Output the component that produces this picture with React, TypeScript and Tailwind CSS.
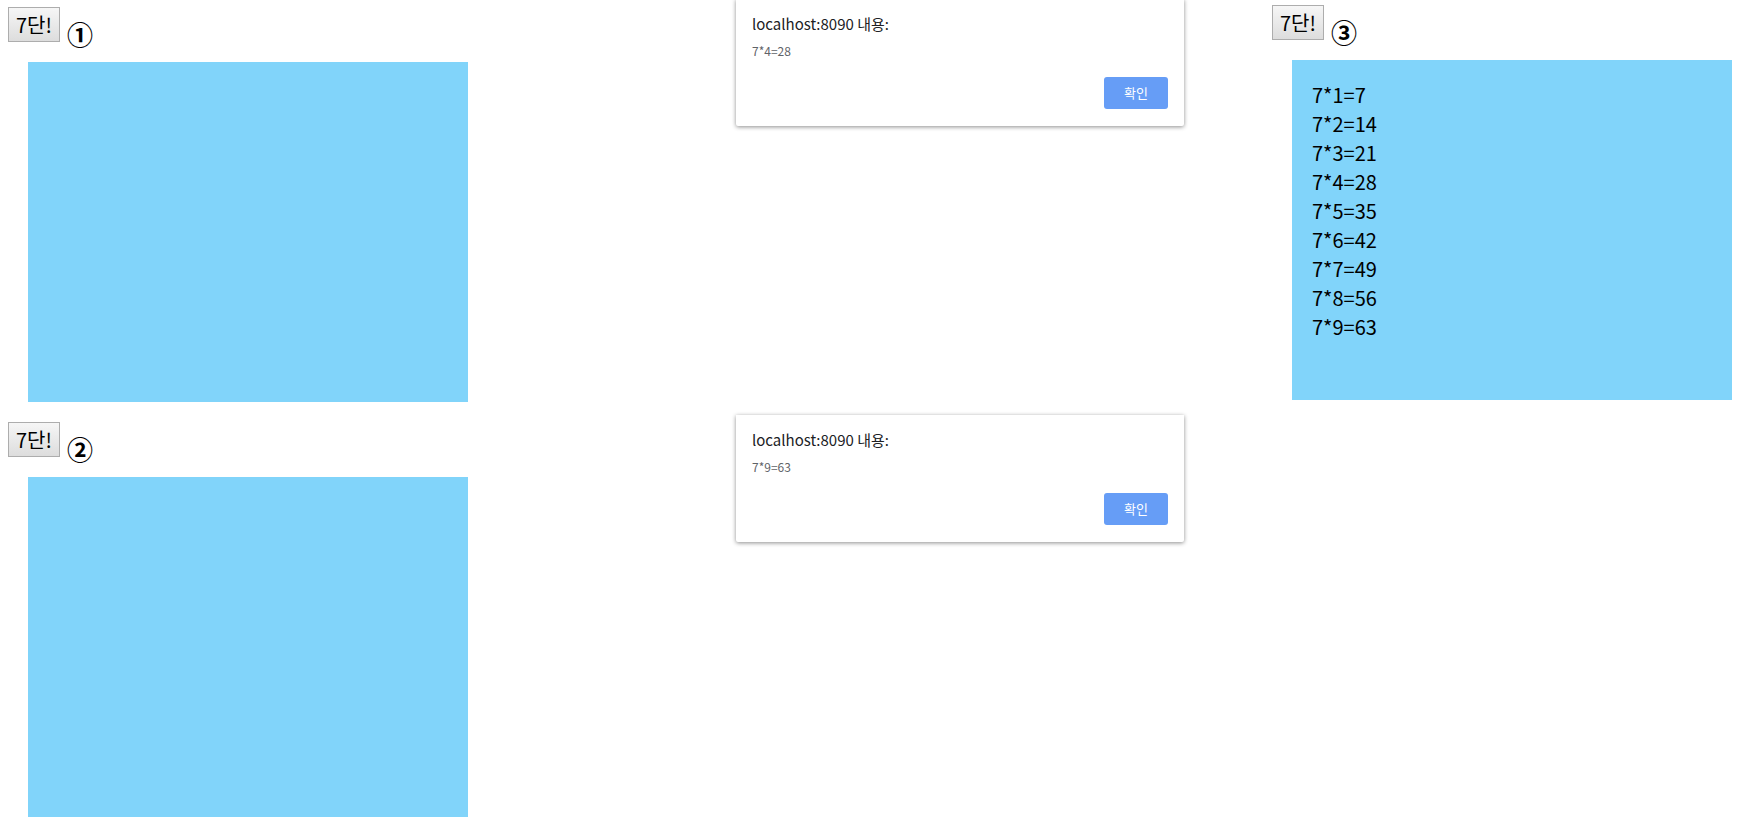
const font = "font-['Noto_Sans_CJK_KR','Malgun_Gothic',sans-serif]";

function GugudanButton() {
  return (
    <button className="h-[35px] px-[7px] border border-[#adadad] bg-gradient-to-b from-[#f6f6f6] to-[#dddddd] text-[20px] leading-[24px] text-black">
      7단!
    </button>
  );
}

interface PanelProps {
  mark: string;
  lines?: string[];
  top: string;
}

function Panel({ mark, lines, top }: PanelProps) {
  return (
    <div className={`flex flex-col ${top}`}>
      <div className="flex items-start gap-[7px] h-[35px]">
        <GugudanButton />
        <span className="mt-[10px] text-[26px] leading-[34px] font-bold text-black">{mark}</span>
      </div>
      <div className="mt-[20px] ml-[20px] w-[440px] h-[340px] bg-[#81d4fa] pl-[20px] pt-[20px]">
        {lines?.map((line) => (
          <div key={line} className="text-[20px] leading-[29px] text-black">
            {line}
          </div>
        ))}
      </div>
    </div>
  );
}

function AlertDialog({ message, className }: { message: string; className: string }) {
  return (
    <div
      className={`w-[448px] h-[127px] bg-white rounded-b-[2px] shadow-[0_1px_4px_rgba(0,0,0,0.45)] px-[16px] pt-[14px] flex flex-col ${className}`}
    >
      <div className="text-[15px] leading-[22px] text-[#202124]">localhost:8090 내용:</div>
      <div className="mt-[8px] text-[12px] leading-[16px] text-[#5f6368]">{message}</div>
      <div className="mt-auto mb-[17px] flex justify-end">
        <button className="w-[64px] h-[32px] rounded-[3px] bg-[#669df6] text-white text-[13px]">
          확인
        </button>
      </div>
    </div>
  );
}

export default function App() {
  const table = Array.from({ length: 9 }, (_, i) => `7*${i + 1}=${7 * (i + 1)}`);

  return (
    <div className={`w-[1745px] h-[824px] overflow-hidden bg-white flex ${font}`}>
      <div className="w-[736px] pl-[8px] flex flex-col">
        <Panel mark="①" top="mt-[7px]" />
        <Panel mark="②" top="mt-[20px]" />
      </div>

      <div className="w-[448px] flex flex-col">
        <AlertDialog message="7*4=28" className="-mt-[1px]" />
        <AlertDialog message="7*9=63" className="mt-[289px]" />
      </div>

      <div className="ml-[88px]">
        <Panel mark="③" lines={table} top="mt-[5px]" />
      </div>
    </div>
  );
}
